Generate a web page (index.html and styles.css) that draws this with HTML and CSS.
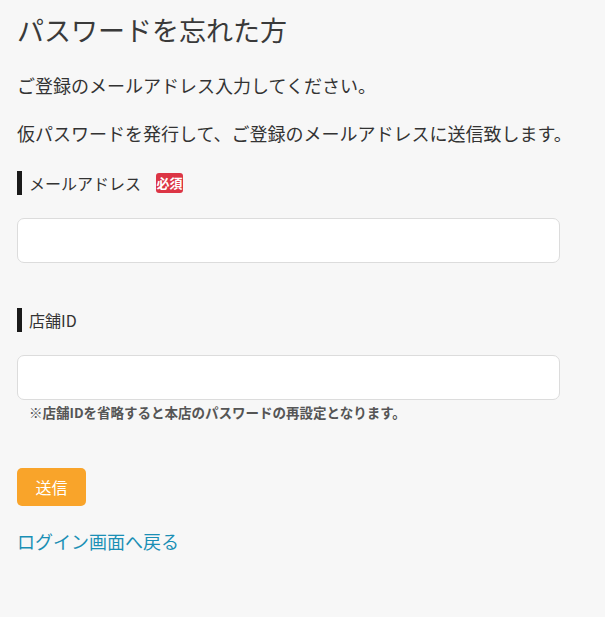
FILE: index.html
```html
<!DOCTYPE html>
<html lang="ja">
<head>
<meta charset="utf-8">
<title>パスワードを忘れた方</title>
<link rel="stylesheet" href="styles.css">
</head>
<body>
<main class="page">
  <h1 class="title">パスワードを忘れた方</h1>
  <p class="lead">ご登録のメールアドレス入力してください。</p>
  <p class="lead lead-2">仮パスワードを発行して、ご登録のメールアドレスに送信致します。</p>

  <div class="field">
    <div class="label"><span class="label-text">メールアドレス</span><span class="badge">必須</span></div>
    <input class="input" type="email">
  </div>

  <div class="field field-2">
    <div class="label"><span class="label-text">店舗ID</span></div>
    <input class="input" type="text">
    <p class="note">※店舗IDを省略すると本店のパスワードの再設定となります。</p>
  </div>

  <button class="submit" type="button">送信</button>
  <a class="back" href="#">ログイン画面へ戻る</a>
</main>
</body>
</html>
```

FILE: styles.css
```css
html, body {
  margin: 0;
  padding: 0;
  background: #f7f7f7;
}
body {
  font-family: "Noto Sans CJK JP", "Noto Sans", sans-serif;
  color: #333;
}
.page {
  display: flex;
  flex-direction: column;
  align-items: flex-start;
  padding: 11px 17px 40px;
  width: 543px;
}
.title {
  margin: 0;
  font-size: 27px;
  font-weight: normal;
  line-height: 38px;
  color: #3a3a3a;
}
.lead {
  margin: 21px 0 0;
  font-size: 18px;
  line-height: 30px;
  white-space: nowrap;
}
.lead-2 {
  margin-top: 18px;
}
.field {
  display: flex;
  flex-direction: column;
  width: 100%;
  margin-top: 23px;
}
.field-2 {
  margin-top: 45px;
}
.label {
  display: flex;
  align-items: center;
  height: 24px;
  border-left: 5px solid #1a1a1a;
  padding-left: 7px;
  font-size: 16px;
}
.label-text {
  line-height: 24px;
}
.badge {
  margin-left: 15px;
  width: 27px;
  height: 20px;
  border-radius: 3px;
  background: #dc3545;
  color: #fff;
  font-size: 13px;
  font-weight: bold;
  line-height: 20px;
  text-align: center;
}
.input {
  box-sizing: border-box;
  margin: 23px 0 0;
  width: 543px;
  height: 45px;
  border: 1px solid #dcdcdc;
  border-radius: 7px;
  background: #fff;
  font: inherit;
}
.note {
  margin: 2px 0 0 12px;
  font-size: 13.5px;
  font-weight: bold;
  line-height: 20px;
  color: #555;
  white-space: nowrap;
}
.submit {
  margin-top: 46px;
  width: 69px;
  height: 38px;
  border: 0;
  border-radius: 5px;
  background: #f9a42a;
  color: #fff;
  font-family: inherit;
  font-size: 16px;
  padding: 0;
}
.back {
  margin-top: 22px;
  font-size: 18px;
  line-height: 26px;
  color: #1a8fb5;
  text-decoration: none;
}
```
